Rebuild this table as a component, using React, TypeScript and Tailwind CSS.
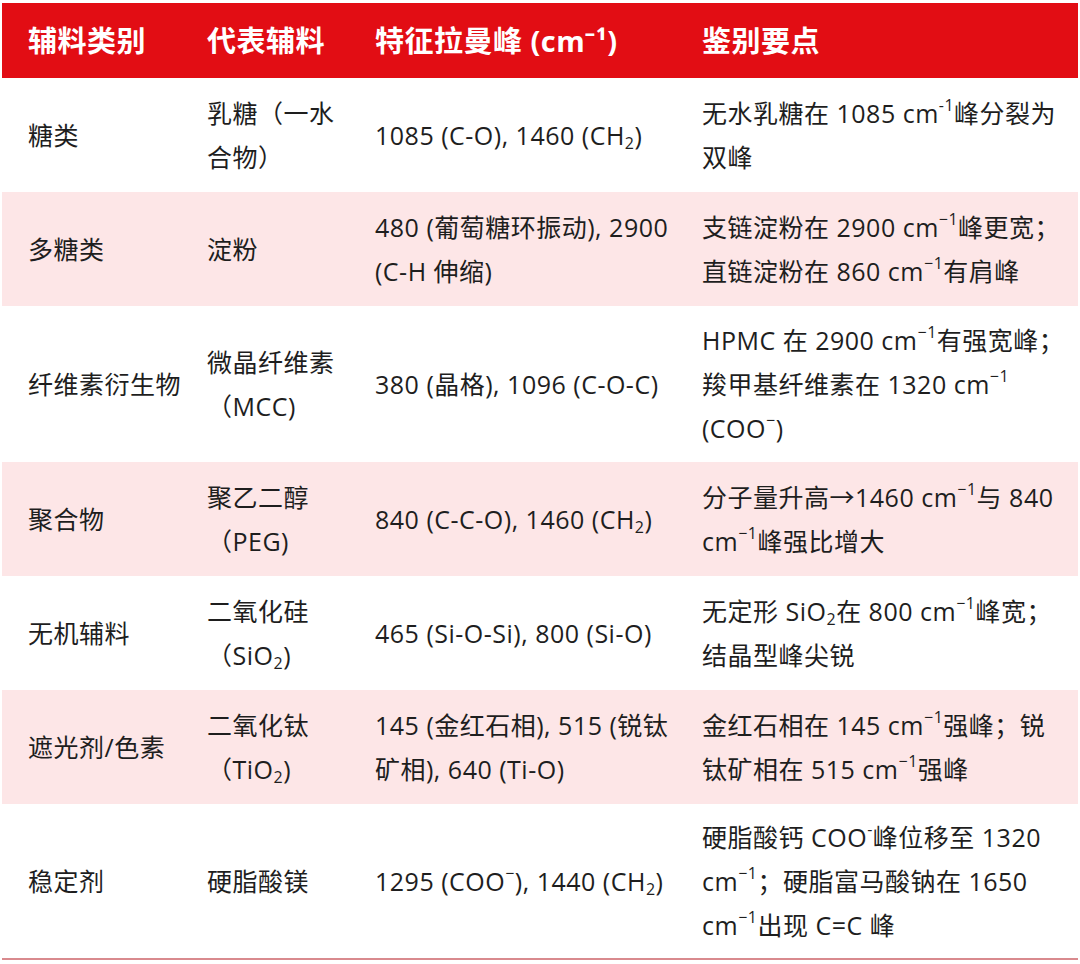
import React from "react";

type Cell = React.ReactNode;

const Up = ({ children }: { children: React.ReactNode }) => (
  <sup className="text-[16px] relative -top-[3px] align-super leading-none">{children}</sup>
);
const Dn = ({ children }: { children: React.ReactNode }) => (
  <sub className="text-[16px] align-baseline relative top-[4px] leading-none">{children}</sub>
);

const rows: { cells: Cell[]; pink: boolean; h: string }[] = [
  {
    pink: false,
    h: "h-[114px]",
    cells: [
      "糖类",
      <>乳糖（一水<br />合物）</>,
      <>1085 (C-O), 1460 (CH<Dn>2</Dn>)</>,
      <>无水乳糖在 1085 cm<Up>-1</Up>峰分裂为<br />双峰</>,
    ],
  },
  {
    pink: true,
    h: "h-[114px]",
    cells: [
      "多糖类",
      "淀粉",
      <>480 (葡萄糖环振动), 2900<br />(C-H 伸缩)</>,
      <>支链淀粉在 2900 cm<Up>−1</Up>峰更宽；<br />直链淀粉在 860 cm<Up>−1</Up>有肩峰</>,
    ],
  },
  {
    pink: false,
    h: "h-[156px]",
    cells: [
      "纤维素衍生物",
      <>微晶纤维素<br />（MCC)</>,
      <>380 (晶格), 1096 (C-O-C)</>,
      <>HPMC 在 2900 cm<Up>−1</Up>有强宽峰；<br />羧甲基纤维素在 1320 cm<Up>−1</Up><br />(COO<Up>−</Up>)</>,
    ],
  },
  {
    pink: true,
    h: "h-[114px]",
    cells: [
      "聚合物",
      <>聚乙二醇<br />（PEG)</>,
      <>840 (C-C-O), 1460 (CH<Dn>2</Dn>)</>,
      <>分子量升高→1460 cm<Up>−1</Up>与 840<br />cm<Up>−1</Up>峰强比增大</>,
    ],
  },
  {
    pink: false,
    h: "h-[114px]",
    cells: [
      "无机辅料",
      <>二氧化硅<br />（SiO<Dn>2</Dn>)</>,
      <>465 (Si-O-Si), 800 (Si-O)</>,
      <>无定形 SiO<Dn>2</Dn>在 800 cm<Up>−1</Up>峰宽；<br />结晶型峰尖锐</>,
    ],
  },
  {
    pink: true,
    h: "h-[114px]",
    cells: [
      "遮光剂/色素",
      <>二氧化钛<br />（TiO<Dn>2</Dn>)</>,
      <>145 (金红石相), 515 (锐钛<br />矿相), 640 (Ti-O)</>,
      <>金红石相在 145 cm<Up>−1</Up>强峰；锐<br />钛矿相在 515 cm<Up>−1</Up>强峰</>,
    ],
  },
  {
    pink: false,
    h: "h-[154px]",
    cells: [
      "稳定剂",
      "硬脂酸镁",
      <>1295 (COO<Up>−</Up>), 1440 (CH<Dn>2</Dn>)</>,
      <>硬脂酸钙 COO<Up>-</Up>峰位移至 1320<br />cm<Up>−1</Up>；硬脂富马酸钠在 1650<br />cm<Up>−1</Up>出现 C=C 峰</>,
    ],
  },
];

const widths = ["w-[179px]", "w-[168px]", "w-[327px]", "flex-1"];
const headers = ["辅料类别", "代表辅料", "特征拉曼峰 (cm⁻¹)", "鉴别要点"];

export default function App() {
  return (
    <div
      className="w-[1080px] h-[964px] bg-white pt-[3px] px-[2px] text-[#1e1e1e]"
      style={{ fontFamily: '"Open Sans", "Noto Sans CJK SC", sans-serif' }}
    >
      <div className="flex h-[75px] bg-[#e20d14] text-white font-bold text-[29px] tracking-[0.5px] items-center">
        {headers.map((t, i) => (
          <div key={i} className={`${widths[i]} pl-[26px] whitespace-nowrap`}>
            {t}
          </div>
        ))}
      </div>
      {rows.map((r, ri) => (
        <div
          key={ri}
          className={`flex items-center ${r.h} ${r.pink ? "bg-[#fde6e7]" : "bg-white"} text-[25px] leading-[44px] tracking-[0.5px]`}
        >
          {r.cells.map((c, ci) => (
            <div key={ci} className={`${widths[ci]} pl-[26px] whitespace-nowrap`}>
              {c}
            </div>
          ))}
        </div>
      ))}
      <div className="h-[2px] bg-[#d98a8e]" />
    </div>
  );
}
